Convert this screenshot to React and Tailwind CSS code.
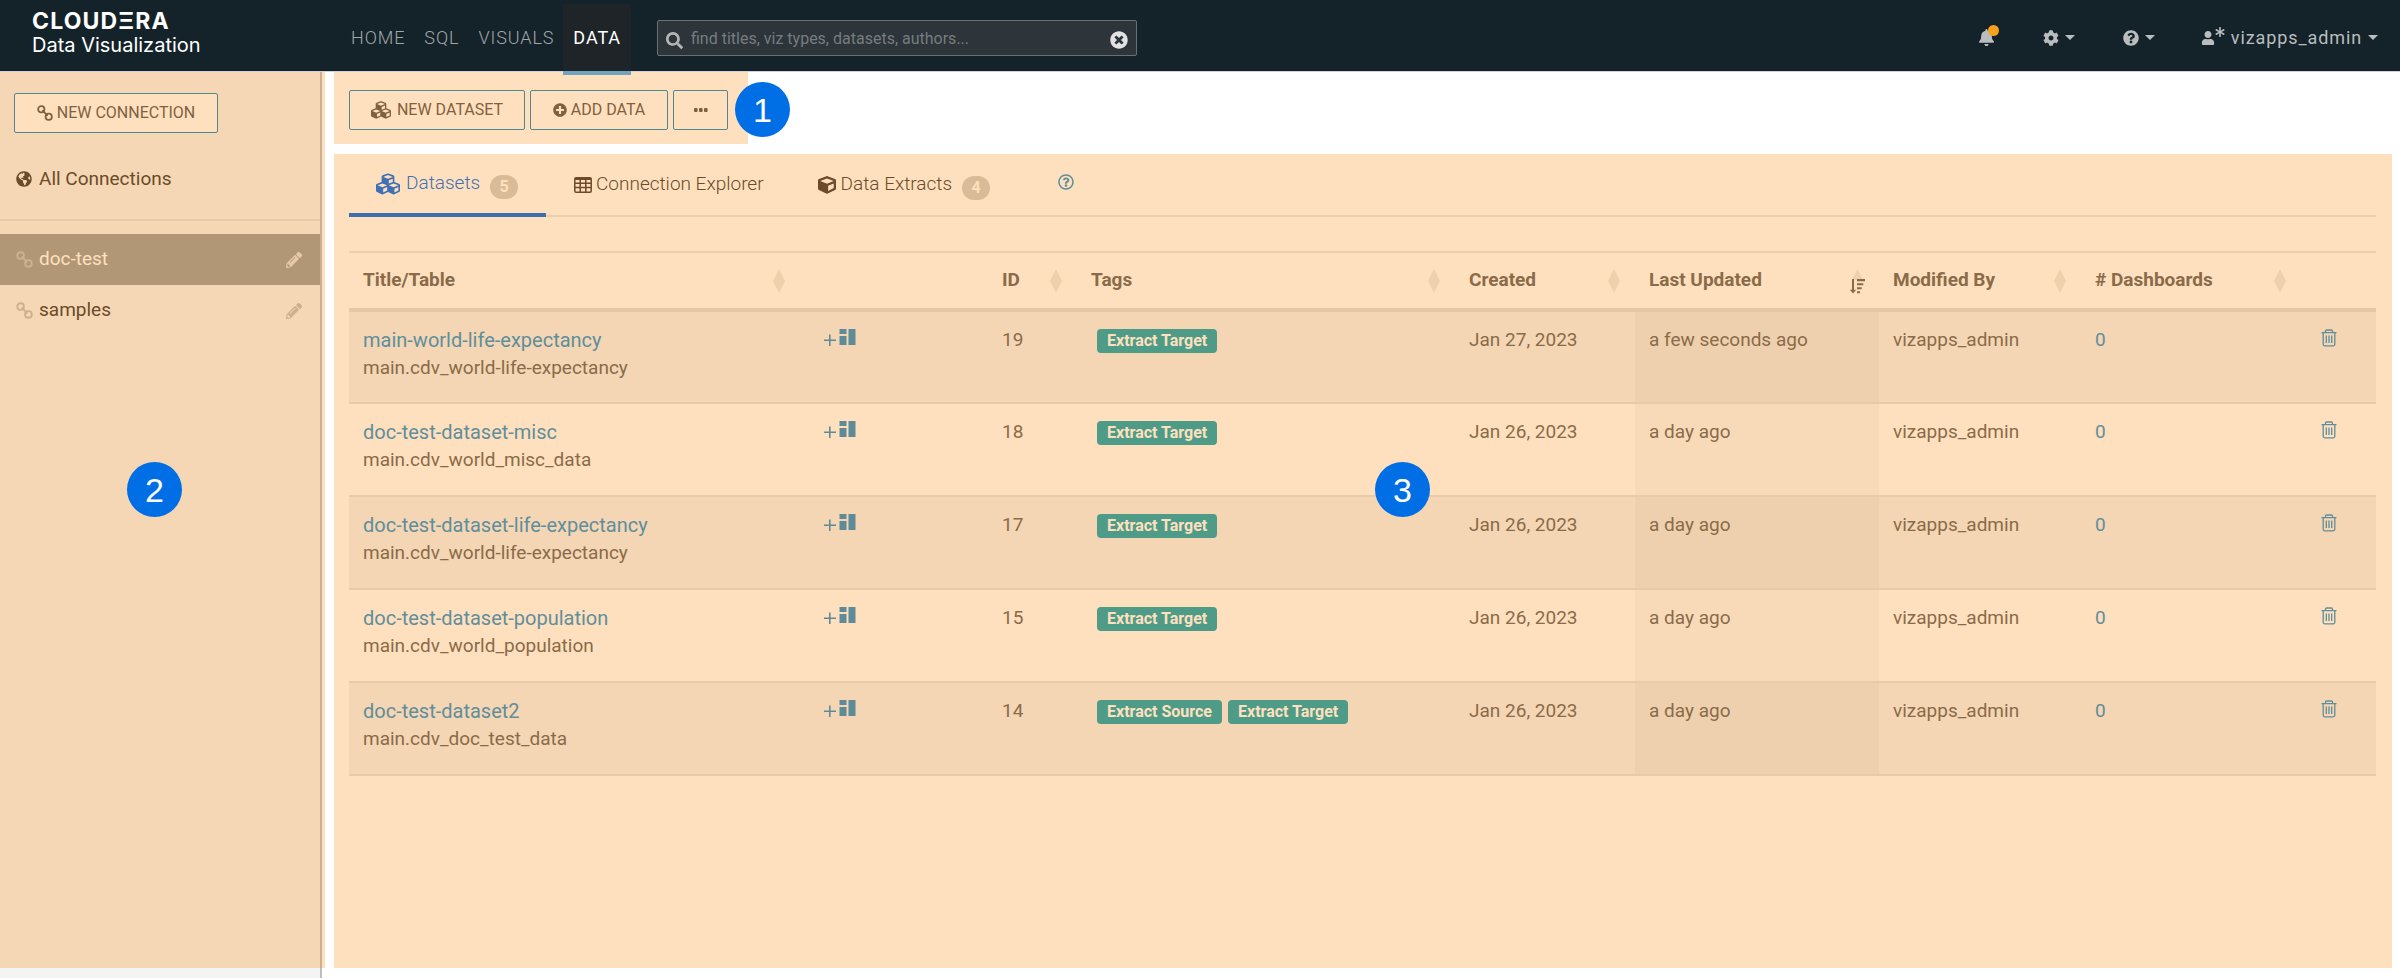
import React from "react";
import {
  FaBell, FaCog, FaQuestionCircle, FaRegQuestionCircle, FaUser, FaAsterisk, FaSearch,
  FaTimesCircle, FaCubes, FaPlusCircle, FaGlobeAmericas, FaPencilAlt, FaCube,
} from "react-icons/fa";

const navItems = ["HOME", "SQL", "VISUALS", "DATA"];

const connections = [
  { name: "doc-test", selected: true },
  { name: "samples", selected: false },
];

const rows = [
  { title: "main-world-life-expectancy", table: "main.cdv_world-life-expectancy", id: 19, tags: ["Extract Target"], created: "Jan 27, 2023", updated: "a few seconds ago" },
  { title: "doc-test-dataset-misc", table: "main.cdv_world_misc_data", id: 18, tags: ["Extract Target"], created: "Jan 26, 2023", updated: "a day ago" },
  { title: "doc-test-dataset-life-expectancy", table: "main.cdv_world-life-expectancy", id: 17, tags: ["Extract Target"], created: "Jan 26, 2023", updated: "a day ago" },
  { title: "doc-test-dataset-population", table: "main.cdv_world_population", id: 15, tags: ["Extract Target"], created: "Jan 26, 2023", updated: "a day ago" },
  { title: "doc-test-dataset2", table: "main.cdv_doc_test_data", id: 14, tags: ["Extract Source", "Extract Target"], created: "Jan 26, 2023", updated: "a day ago" },
];

function ChainIcon({ className }) {
  return (
    <svg viewBox="0 0 16 16" fill="none" stroke="currentColor" strokeWidth="1.8" strokeLinecap="round" className={className} aria-hidden="true">
      <rect x="1.200" y="1.200" width="6.200" height="6.200" rx="2.900" />
      <rect x="8.600" y="8.600" width="6.200" height="6.200" rx="2.900" />
      <path d="M5.800 5.800l4.400 4.400" />
    </svg>
  );
}

function GridIcon() {
  return (
    <svg viewBox="0 0 18 16" className="mr-1 h-4 w-[18px]" fill="none" stroke="currentColor" strokeWidth="1.500" aria-hidden="true">
      <rect x=".8" y=".8" width="16.400" height="14.400" rx="1.200" />
      <path d="M1 2h16" strokeWidth="2" />
      <path d="M1 6.200h16M1 10.600h16M6.200 2v13M11.800 2v13" />
    </svg>
  );
}

function Caret() {
  return (
    <svg viewBox="0 0 10 5" className="h-[5px] w-2.5 fill-current" aria-hidden="true">
      <path d="M0 0h10L5 5z" />
    </svg>
  );
}

function SortIcon() {
  return (
    <svg viewBox="0 0 12 24" className="h-6 w-3 fill-[#efd0ad]" aria-hidden="true">
      <path d="M6 0l6 12-6 12-6-12z" />
    </svg>
  );
}

function SortedDescIcon() {
  return (
    <svg viewBox="0 0 16 26" className="h-[26px] w-4" aria-hidden="true">
      <path d="M8.500 1L14 12H3z" fill="#efd0ad" />
      <path d="M4 11v13" stroke="#8a6b49" strokeWidth="2" />
      <path d="M.8 21.800h6.400L4 25.500z" fill="#8a6b49" />
      <path d="M8 11h8v2.200H8zM8 15.200h6.300v2H8zM8 19.200h4.700v2H8zM8 23.200h3v2H8z" fill="#8a6b49" />
    </svg>
  );
}

function AddDashboardIcon() {
  return (
    <svg viewBox="0 0 32 17" className="h-[17px] w-8" fill="currentColor" aria-hidden="true">
      <path d="M5 5.500h1.600v5H12v1.600H6.600v5H5v-5H0v-1.600h5z" />
      <path d="M15.500 0h7v5h-7zM15.500 7h7v9h-7zM24.500 0h7v16h-7z" />
    </svg>
  );
}

function TrashIcon() {
  return (
    <svg viewBox="0 0 16 18" className="h-[18px] w-4" fill="none" stroke="currentColor" strokeWidth="1.300" aria-hidden="true">
      <path d="M.5 3.700h15M4.500 3.500V2.200Q4.500 1 5.700 1h4.600q1.200 0 1.200 1.200v1.300M2.200 3.700v11.600q0 1.500 1.500 1.500h8.600q1.500 0 1.500-1.500V3.700M5.300 6.500v7.500M8 6.500v7.500M10.700 6.500v7.500" />
    </svg>
  );
}

function Marker({ children, className }) {
  return (
    <div className={`absolute flex size-[55px] items-center justify-center rounded-full bg-[#006ee5] font-['Liberation_Sans',sans-serif] text-[34px] leading-none text-white ${className}`}>
      {children}
    </div>
  );
}

function HeaderCell({ children, sort }) {
  return (
    <th scope="col" className="h-[58px] px-3.5 text-left align-middle font-bold">
      <div className="flex items-center justify-between">
        <span>{children}</span>
        {sort === "none" && <span className="pr-px"><SortIcon /></span>}
        {sort === "desc" && <SortedDescIcon />}
      </div>
    </th>
  );
}

function Header() {
  return (
    <header className="flex h-[71px] items-stretch bg-[#142329] text-lg text-[#b9bdbf]">
      <div className="w-[341px] shrink-0 pt-[9px] pl-8 font-['Inter',sans-serif] text-white">
        <div className="text-[23px] leading-6 font-bold tracking-wider">CLOUDΞRA</div>
        <div className="text-[20px] leading-6">Data Visualization</div>
      </div>
      <nav className="flex pt-1 text-[18px] tracking-wider">
        {navItems.map((item) =>
          item === "DATA" ? (
            <a key={item} href="#data" aria-current="page" className="z-10 -mb-1 flex items-center border-b-4 border-[#70a3c0] bg-[#1f2429] px-2.5 text-white">{item}</a>
          ) : (
            <a key={item} href={`#${item.toLowerCase()}`} className="flex items-center pr-[9px] pl-2.5 font-light text-[#a1a7aa]">{item}</a>
          )
        )}
      </nav>
      <label className="mt-5 ml-[26px] flex h-9 w-[480px] items-center rounded-xs border border-[#6a6f72] bg-[#2d343a] px-2">
        <FaSearch className="mt-1 size-[17px] text-[#b5b5b5]" aria-hidden="true" />
        <input type="text" aria-label="Search" placeholder="find titles, viz types, datasets, authors..." className="ml-2 min-w-0 flex-1 bg-transparent pt-0.5 text-base outline-none placeholder:text-[#777c80]" />
        <button type="button" aria-label="Clear search" className="mt-1"><FaTimesCircle className="size-[18px] text-[#e2e2e2]" /></button>
      </label>
      <div className="ml-auto flex items-center pt-1 pr-[22px]">
        <button type="button" aria-label="Notifications" className="relative mr-12">
          <FaBell className="size-[17px]" />
          <span className="absolute -top-1 -right-1 size-[11px] rounded-full bg-[#f9a11b]" />
        </button>
        <button type="button" aria-label="Settings" className="mr-12 flex items-center gap-1.5"><FaCog className="size-4" /><Caret /></button>
        <button type="button" aria-label="Help" className="mr-[46px] flex items-center gap-1.5"><FaQuestionCircle className="size-4" /><Caret /></button>
        <button type="button" className="flex items-center tracking-wider">
          <FaUser className="size-[14px]" />
          <FaAsterisk className="mb-3 size-[10px]" />
          <span className="mx-1.5">vizapps_admin</span>
          <Caret />
        </button>
      </div>
    </header>
  );
}

function Sidebar() {
  return (
    <aside className="relative flex w-[325px] shrink-0 flex-col">
      <div className="flex flex-1">
        <div className="flex-1 border-r-2 border-[#cdb08f] bg-[#f5d7b5] pt-[21px]">
          <button type="button" className="ml-3.5 flex h-10 w-[204px] items-center justify-center gap-1 rounded-xs border border-[#4f8793] bg-[#ffe0be] text-base text-[#7f6040]">
            <ChainIcon className="size-4" />NEW CONNECTION
          </button>
          <a href="#all" className="mt-8 flex h-7 items-center gap-[7px] pl-4 text-[19px] text-[#6b4b29]">
            <FaGlobeAmericas className="size-4" />All Connections
          </a>
          <hr className="mt-[26px] border-t-2 border-[#e6c9a8]" />
          <ul className="mt-[13px]">
            {connections.map((c) => (
              <li key={c.name} className={c.selected ? "flex h-[51px] items-center bg-[#b29777] pr-[18px] pl-4 text-[19px] text-[#ffe0be]" : "flex h-[51px] items-center pr-[18px] pl-4 text-[19px] text-[#6b4b29]"}>
                <ChainIcon className="size-[17px] text-[#cdb08e]" />
                <a href={`#${c.name}`} className="ml-1.5 flex-1">{c.name}</a>
                <button type="button" aria-label={`Edit ${c.name}`} className={c.selected ? "text-[#e8caa8]" : "text-[#cdb08e]"}><FaPencilAlt className="size-4" /></button>
              </li>
            ))}
          </ul>
        </div>
        <div className="w-[3px] bg-[#ffe0be]" />
      </div>
      <div className="mr-[3px] h-2.5 border-r-2 border-[#bdbdbd] bg-[#f4f4f4]" />
      <Marker className="top-[390px] left-[127px]">2</Marker>
    </aside>
  );
}

function Toolbar() {
  const button = "flex h-10 items-center rounded-xs border border-[#4f8793] text-base text-[#7f6040]";
  return (
    <div className="relative flex h-[72px] w-[414px] gap-[5px] bg-[#ffe0be] pt-[18px] pl-[15px]">
      <button type="button" className={`${button} w-44 justify-center gap-1.5`}><FaCubes className="size-5" />NEW DATASET</button>
      <button type="button" className={`${button} w-[138px] justify-center gap-1`}><FaPlusCircle className="size-3.5" />ADD DATA</button>
      <button type="button" aria-label="More actions" className={`${button} w-[55px] justify-center`}>
        <svg viewBox="0 0 14 4" className="h-1 w-3.5" fill="currentColor" aria-hidden="true"><rect width="3.600" height="4" rx="1" /><rect x="5" width="3.600" height="4" rx="1" /><rect x="10" width="3.600" height="4" rx="1" /></svg>
      </button>
      <Marker className="top-2.5 left-[401px]">1</Marker>
    </div>
  );
}

function Badge({ children }) {
  return <span className="mt-1.5 ml-2.5 flex h-6 w-7 items-center justify-center rounded-full bg-[#d9bb98] text-base font-bold text-[#ffe0be]">{children}</span>;
}

function Tabs() {
  return (
    <div className="flex h-[63px] border-b-2 border-[#ecceac] text-[19px] font-light text-[#6b4b29]">
      <a href="#datasets" aria-current="true" className="-mb-0.5 flex w-[197px] items-center border-b-4 border-[#3d6eb0] pl-[27px] text-[#3f70b3]">
        <FaCubes className="mr-1.5 size-6" />Datasets<Badge>5</Badge>
      </a>
      <a href="#explorer" className="flex items-center pr-[26px] pl-7"><GridIcon />Connection Explorer</a>
      <a href="#extracts" className="flex items-center pr-[26px] pl-7"><FaCube className="mr-[5px] size-[18px]" />Data Extracts<Badge>4</Badge></a>
      <button type="button" aria-label="Help" className="mb-1.5 ml-[42px] text-[#5f8e9c]"><FaRegQuestionCircle className="size-4" /></button>
    </div>
  );
}

function DatasetTable() {
  return (
    <table className="mt-[34px] w-full table-fixed border-t-2 border-[#ecceac] text-[19px] text-[#8a6b49]">
      <colgroup>
        <col />
        <col className="w-[188px]" />
        <col className="w-[89px]" />
        <col className="w-[378px]" />
        <col className="w-[180px]" />
        <col className="w-[244px]" />
        <col className="w-[202px]" />
        <col className="w-[220px]" />
        <col className="w-[75px]" />
      </colgroup>
      <thead>
        <tr className="border-b-4 border-[#e6c8a8]">
          <HeaderCell sort="none">Title/Table</HeaderCell>
          <td />
          <HeaderCell sort="none">ID</HeaderCell>
          <HeaderCell sort="none">Tags</HeaderCell>
          <HeaderCell sort="none">Created</HeaderCell>
          <HeaderCell sort="desc">Last Updated</HeaderCell>
          <HeaderCell sort="none">Modified By</HeaderCell>
          <HeaderCell sort="none"># Dashboards</HeaderCell>
          <td />
        </tr>
      </thead>
      <tbody>
        {rows.map((r, i) => (
          <tr key={r.id} className={i % 2 === 0 ? "h-[93px] border-b-2 border-[#e8caa9] bg-[#f4d6b4] align-top leading-7" : "h-[93px] border-b-2 border-[#e8caa9] align-top leading-7"}>
            <td className="px-3.5 pt-3.5">
              <a href={`#dataset-${r.id}`} className="block text-xl leading-7 text-[#5f8e9c]">{r.title}</a>
              <div>{r.table}</div>
            </td>
            <td className="pt-[17px] pl-6 text-[#5f8a97]"><button type="button" aria-label={`Add dashboard for ${r.title}`} className="block"><AddDashboardIcon /></button></td>
            <td className="px-3.5 pt-3.5">{r.id}</td>
            <td className="px-3.5 pt-[17px]">
              <div className="flex gap-1.5 pl-1.5">
                {r.tags.map((t) => (
                  <span key={t} className="flex h-6 items-center rounded-sm bg-[#4e9c88] px-2.5 text-base font-bold text-[#ffe0be]">{t}</span>
                ))}
              </div>
            </td>
            <td className="px-3.5 pt-3.5">{r.created}</td>
            <td className={i % 2 === 0 ? "bg-[#efd0ae] px-3.5 pt-3.5" : "bg-[#f8dab8] px-3.5 pt-3.5"}>{r.updated}</td>
            <td className="px-3.5 pt-3.5">vizapps_admin</td>
            <td className="px-3.5 pt-3.5"><a href={`#dashboards-${r.id}`} className="text-[#5f8e9c]">0</a></td>
            <td className="pt-[17px] pl-5 text-[#5f8e9c]"><button type="button" aria-label={`Delete ${r.title}`} className="block"><TrashIcon /></button></td>
          </tr>
        ))}
      </tbody>
    </table>
  );
}

export default function App() {
  return (
    <div className="flex min-h-screen flex-col bg-white font-['Roboto',sans-serif]">
      <Header />
      <div className="flex flex-1 border-t border-[#d5d0d8]">
        <Sidebar />
        <main className="flex min-w-0 flex-1 flex-col gap-2.5 pr-2 pb-2.5 pl-[9px]">
          <Toolbar />
          <section className="relative flex-1 bg-[#ffe0be] pr-4 pl-[15px]">
            <Tabs />
            <DatasetTable />
            <Marker className="top-[308px] left-1/2 ml-3">3</Marker>
          </section>
        </main>
      </div>
    </div>
  );
}
